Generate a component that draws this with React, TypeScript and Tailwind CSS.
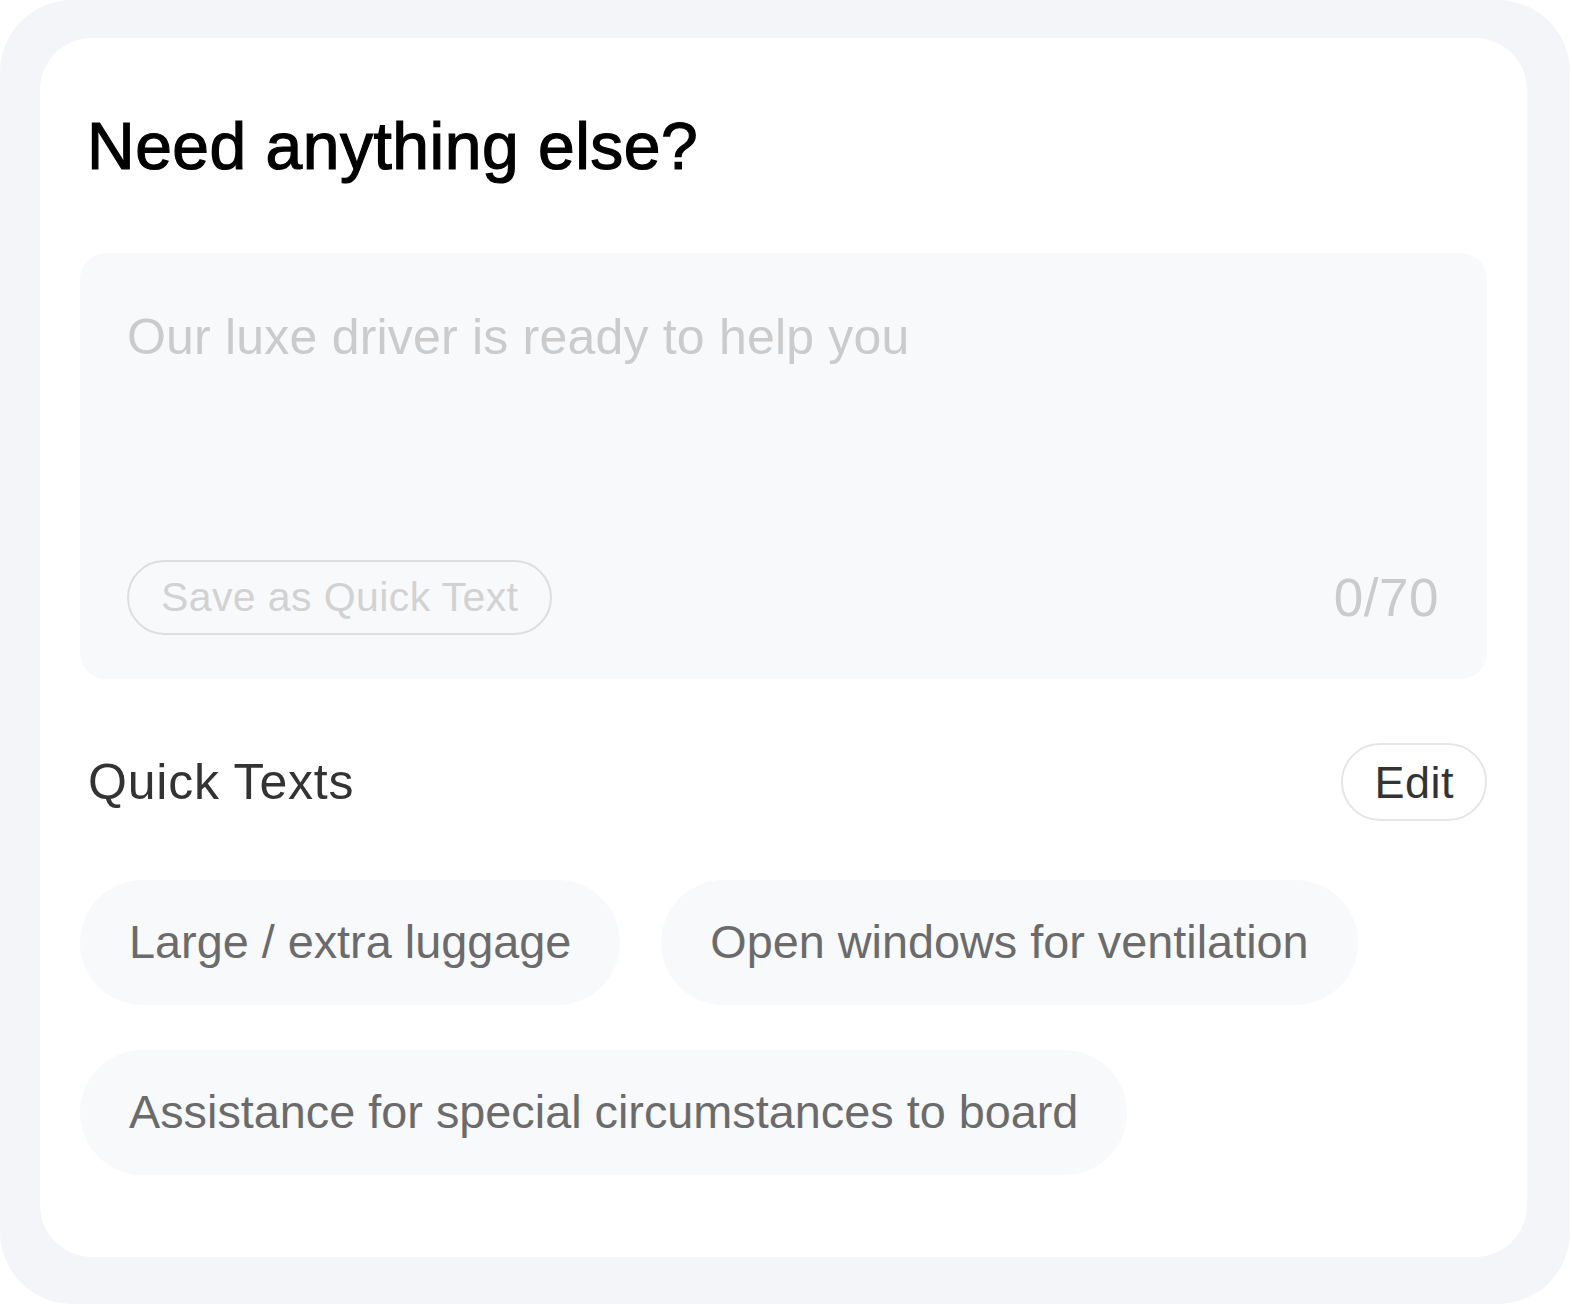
const quickTexts = [
  "Large / extra luggage",
  "Open windows for ventilation",
  "Assistance for special circumstances to board",
];

export default function App() {
  return (
    <div className="min-h-screen bg-white font-['Liberation_Sans',Arial,sans-serif]">
      <div className="h-[1304px] w-[1570px] rounded-[72px] bg-[#f4f5f8] pl-10 pr-[43px] pt-[38px] pb-[47px]">
        <div className="flex h-full flex-col rounded-[52px] bg-white px-10 pt-[75px]">
          <h1 className="pl-[7px] text-[66px] leading-[66px] font-normal tracking-[0.5px] text-black [-webkit-text-stroke:1.2px_black]">
            Need anything else?
          </h1>

          {/* note input */}
          <div className="mt-[74px] flex h-[426px] flex-col justify-between rounded-[26px] bg-[#f8f9fb] pl-[47px] pr-[48px] pt-[59px] pb-[44px]">
            <p className="text-[50px] leading-[50px] tracking-[0.2px] text-[#cbcbcb]">Our luxe driver is ready to help you</p>
            <div className="flex items-center justify-between">
              <button className="h-[75px] rounded-full border-2 border-[#dedede] px-[32px] text-[41px] leading-none tracking-[0.4px] text-[#d2d2d2]">
                Save as Quick Text
              </button>
              <span className="text-[53px] leading-none tracking-[0.5px] text-[#cbcbcb]">0/70</span>
            </div>
          </div>

          <div className="mt-16 flex items-center justify-between">
            <h2 className="pl-[8px] text-[50px] leading-[50px] tracking-[0.8px] text-[#333]">Quick Texts</h2>
            <button className="h-[78px] rounded-full border-2 border-[#e6e6e6] px-[31px] text-[45px] leading-none tracking-[0.5px] text-[#333]">
              Edit
            </button>
          </div>

          <div className="mt-[59px] flex flex-wrap gap-x-[41px] gap-y-[45px]">
            {quickTexts.map((t) => (
              <button
                key={t}
                className="h-[125px] rounded-full bg-[#f8f9fb] px-[49px] text-[46.8px] leading-none text-[#6b6b6b]"
              >
                {t}
              </button>
            ))}
          </div>
        </div>
      </div>
    </div>
  );
}
